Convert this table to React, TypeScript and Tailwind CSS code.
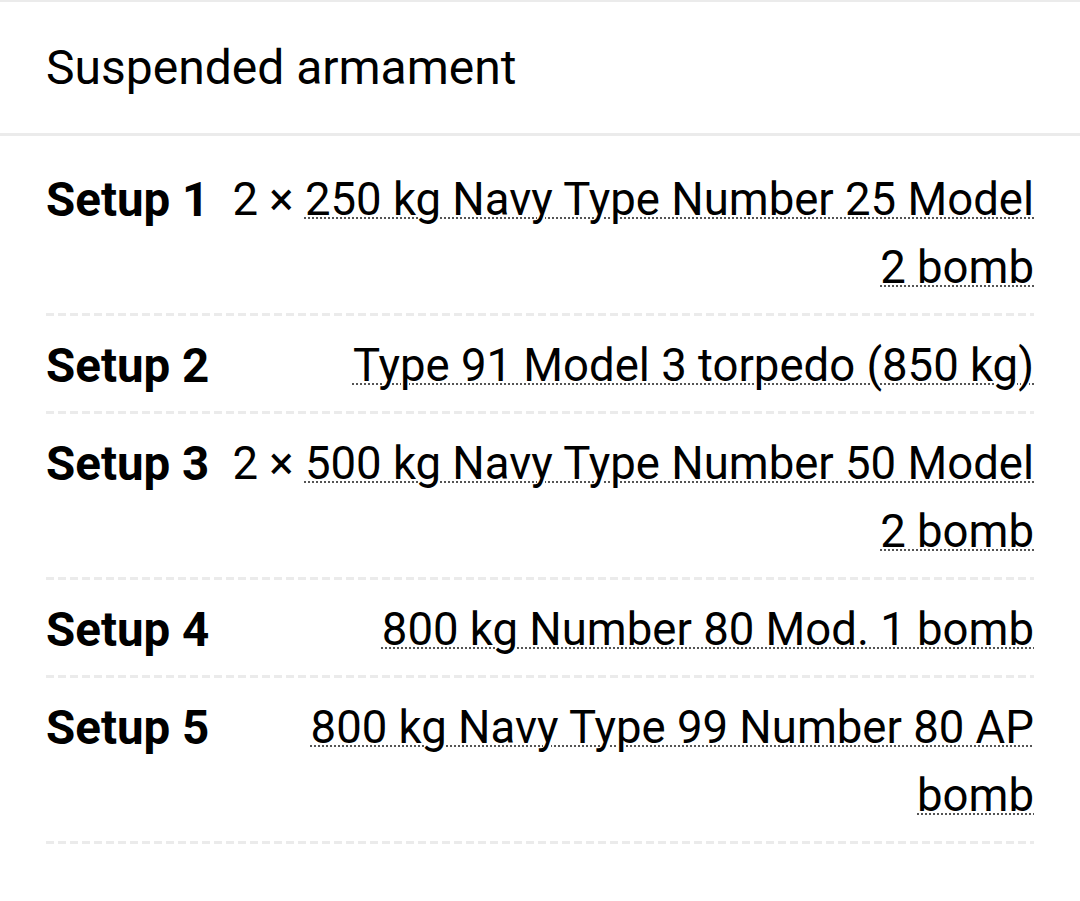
const rows: { label: string; prefix?: string; value: string }[] = [
  { label: "Setup 1", prefix: "2 × ", value: "250 kg Navy Type Number 25 Model 2 bomb" },
  { label: "Setup 2", value: "Type 91 Model 3 torpedo (850 kg)" },
  { label: "Setup 3", prefix: "2 × ", value: "500 kg Navy Type Number 50 Model 2 bomb" },
  { label: "Setup 4", value: "800 kg Number 80 Mod. 1 bomb" },
  { label: "Setup 5", value: "800 kg Navy Type 99 Number 80 AP bomb" },
];

export default function App() {
  return (
    <div className="min-h-[901px] w-[1080px] bg-white font-['Roboto',sans-serif] text-black">
      <div className="border-t-2 border-b-[3px] border-[#ebebeb] pl-[46px] pt-[38px] pb-[37px]">
        <h2 className="text-[48px] leading-[56px]">Suspended armament</h2>
      </div>

      <div className="px-[46px] pt-[14px]">
        {rows.map((r) => (
          <div key={r.label}>
            <div className="flex gap-[24px] pt-[16px] pb-[11px] leading-[68px]">
              <div className="w-[162px] shrink-0 whitespace-nowrap text-[47.5px] font-bold">{r.label}</div>
              <div className="flex-1 text-right text-[45.5px]">
                {r.prefix}
                <span className="underline decoration-dotted decoration-[#555] decoration-2 underline-offset-[2px]">
                  {r.value}
                </span>
              </div>
            </div>
            {/* dashed row separator */}
            <div className="h-[3px] bg-[repeating-linear-gradient(90deg,#ebebeb_0px,#ebebeb_8px,transparent_8px,transparent_12px)]" />
          </div>
        ))}
      </div>
    </div>
  );
}
